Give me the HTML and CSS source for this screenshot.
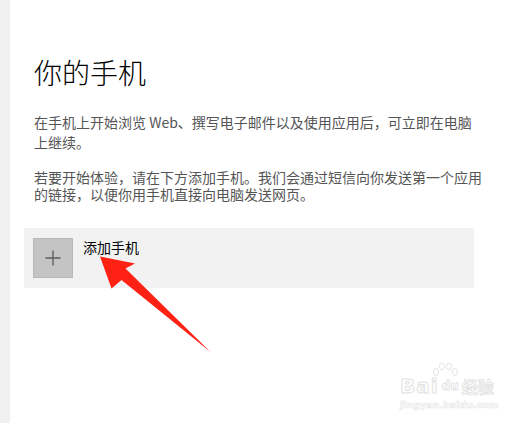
FILE: index.html
```html
<!DOCTYPE html>
<html lang="zh-CN">
<head>
<meta charset="utf-8">
<title>你的手机</title>
<link rel="stylesheet" href="styles.css">
</head>
<body>
<div class="page">
  <div class="sidebar"></div>
  <main class="main">
    <h1 class="title">你的手机</h1>
    <p class="desc desc-1">在手机上开始浏览 Web、撰写电子邮件以及使用应用后，可立即在电脑上继续。</p>
    <p class="desc desc-2">若要开始体验，请在下方添加手机。我们会通过短信向你发送第一个应用的链接，以便你用手机直接向电脑发送网页。</p>
    <div class="add-card">
      <div class="plus-box">
        <svg class="plus-icon" width="16" height="16" viewBox="0 0 16 16"><path d="M8 0.5V15.5M0.5 8H15.5" stroke="#5b5b5b" stroke-width="1.3" fill="none"/></svg>
      </div>
      <span class="add-label">添加手机</span>
    </div>
  </main>
</div>
<svg class="arrow" width="532" height="423" viewBox="0 0 532 423">
  <polygon points="100,256.5 135,263.5 125.5,268.5 210.5,352 121.5,280 111.5,288.5" fill="#fe2114"/>
</svg>
<div class="watermark">
  <svg class="paw" width="30" height="24" viewBox="0 0 30 24">
    <g fill="none" stroke="#e4e4e4" stroke-width="1">
      <ellipse cx="6" cy="10" rx="2.6" ry="3.4"/>
      <ellipse cx="12" cy="4.5" rx="2.6" ry="3.4"/>
      <ellipse cx="19" cy="4.5" rx="2.6" ry="3.4"/>
      <ellipse cx="25" cy="10" rx="2.6" ry="3.4"/>
    </g>
  </svg>
  <div class="wm-row"><span class="wm-bai">Bai</span><span class="wm-du">du</span><span class="wm-jy">经验</span></div>
  <div class="wm-url">jingyan.baidu.com</div>
</div>
</body>
</html>
```
FILE: styles.css
```css
html, body {
  margin: 0;
  padding: 0;
  background: #ffffff;
}
body {
  width: 532px;
  height: 423px;
  overflow: hidden;
  font-family: "Noto Sans CJK SC", "Noto Sans", sans-serif;
  position: relative;
}
.page {
  display: flex;
  height: 423px;
}
.sidebar {
  width: 10px;
  flex: none;
  background: #f0f0f0;
}
.main {
  width: 450px;
  padding: 54px 0 0 14px;
}
.title {
  margin: 0;
  padding-left: 10px;
  font-size: 28px;
  line-height: 36px;
  font-weight: 300;
  color: #000;
}
.desc {
  margin: 0;
  padding-left: 10px;
  font-size: 14px;
  color: #555555;
}
.desc-1 {
  margin-top: 22px;
  line-height: 20px;
}
.desc-2 {
  margin-top: 17px;
  margin-right: -12px;
  line-height: 17px;
}
.add-card {
  margin-top: 25px;
  background: #f2f2f2;
  height: 60px;
  box-sizing: border-box;
  padding: 10px 9px;
  display: flex;
  align-items: flex-start;
}
.plus-box {
  width: 40px;
  height: 40px;
  box-sizing: border-box;
  background: #c4c4c4;
  border: 1px solid #b9b9b9;
  display: flex;
  align-items: center;
  justify-content: center;
}
.add-label {
  margin-left: 10px;
  font-size: 14px;
  line-height: 19px;
  color: #000;
}
.arrow {
  position: absolute;
  left: 0;
  top: 0;
  pointer-events: none;
}
.watermark {
  position: absolute;
  left: 400px;
  top: 362px;
  width: 95px;
  font-family: "DejaVu Sans", sans-serif;
  color: #fff;
}
.paw {
  position: absolute;
  left: 30px;
  top: 0;
}
.wm-row {
  margin-top: 14px;
  display: flex;
  align-items: center;
  height: 20px;
}
.wm-bai {
  font-size: 20px;
  font-weight: bold;
  color: #fff;
  -webkit-text-stroke: 1px #e2e2e2;
  letter-spacing: 1px;
}
.wm-du {
  font-size: 12px;
  font-weight: bold;
  color: #fff;
  -webkit-text-stroke: 0.8px #e2e2e2;
  margin-left: 3px;
}
.wm-jy {
  font-family: "Noto Sans CJK SC", sans-serif;
  font-size: 16px;
  font-weight: bold;
  color: #fff;
  -webkit-text-stroke: 0.8px #e2e2e2;
  margin-left: 3px;
}
.wm-url {
  margin-top: 3px;
  font-size: 9.5px;
  font-weight: bold;
  color: #fff;
  -webkit-text-stroke: 0.6px #e6e6e6;
  white-space: nowrap;
}
```
